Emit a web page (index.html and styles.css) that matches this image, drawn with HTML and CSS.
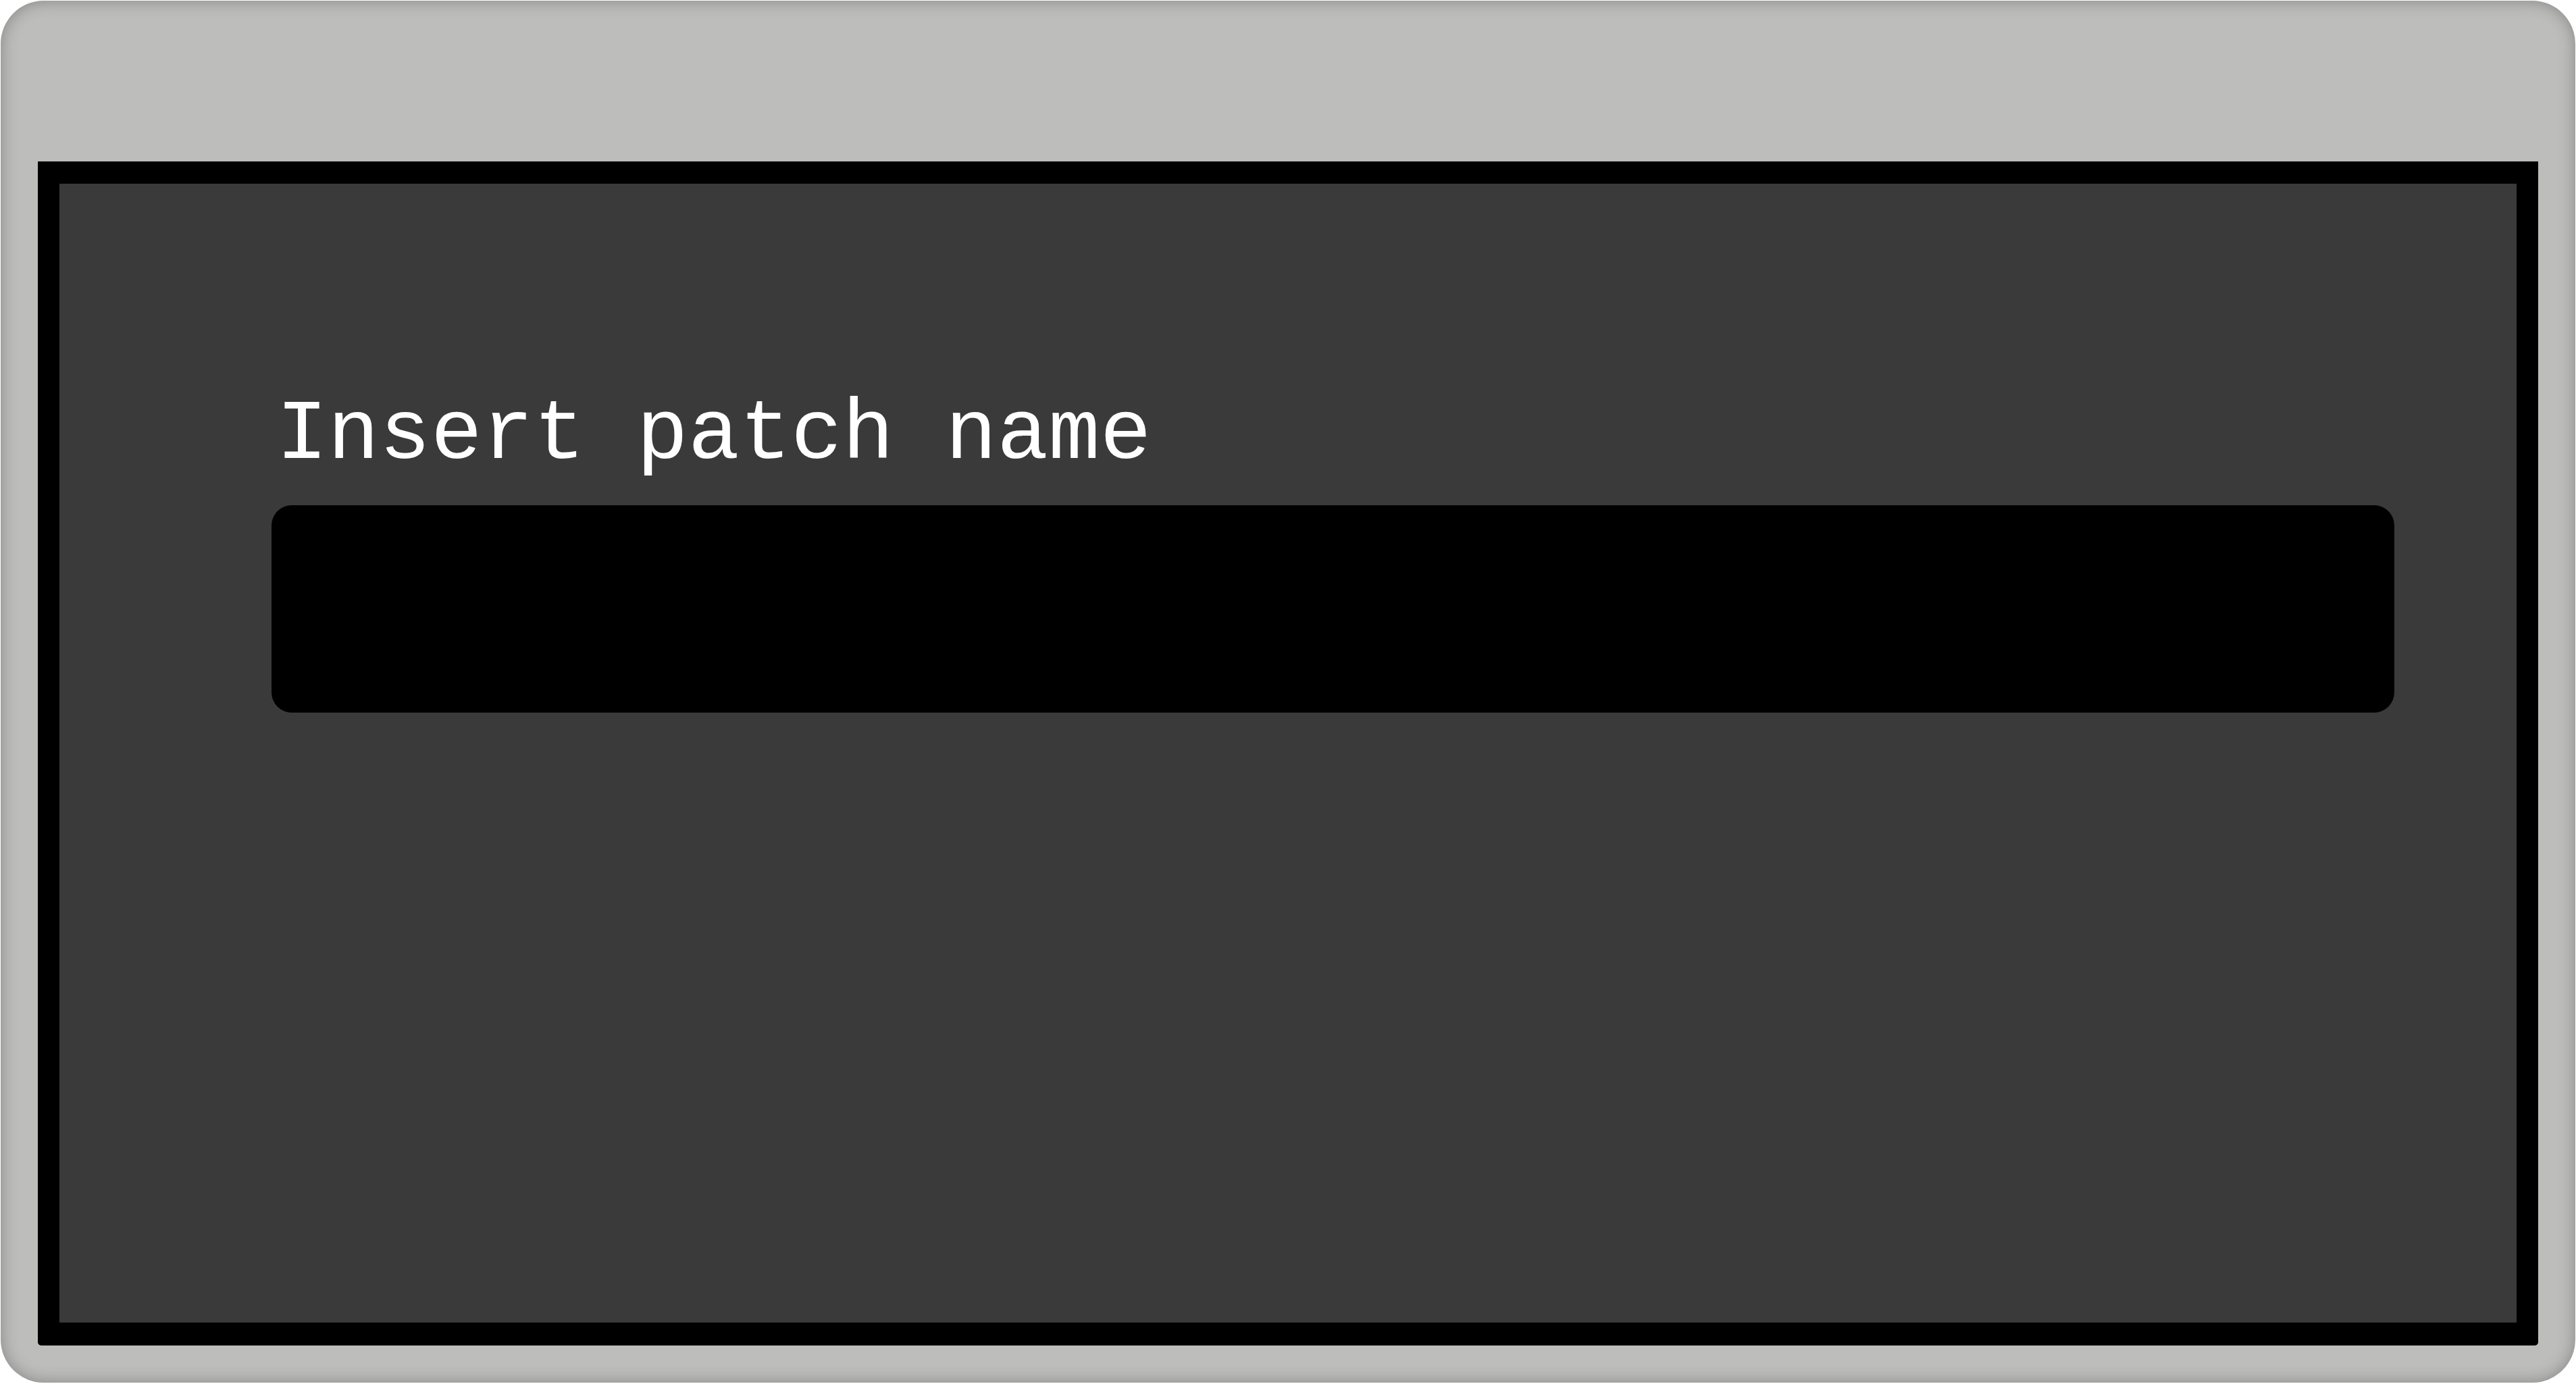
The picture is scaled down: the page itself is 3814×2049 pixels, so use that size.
FILE: index.html
```html
<!DOCTYPE html>
<html>
<head>
<meta charset="utf-8">
<link rel="stylesheet" href="styles.css">
</head>
<body>
<div class="window">
  <div class="frame">
    <div class="panel">
      <label class="label" for="patch">Insert patch name</label>
      <div class="input" id="patch"></div>
    </div>
  </div>
</div>
</body>
</html>
```
FILE: styles.css
```css
html, body {
  margin: 0;
  padding: 0;
  background: #ffffff;
}
body {
  width: 3814px;
  height: 2049px;
  overflow: hidden;
}
.window {
  box-sizing: border-box;
  margin: 1px;
  width: 3812px;
  height: 2046px;
  border-radius: 64px;
  background: #bdbdbb;
  box-shadow: inset 0 0 24px rgba(0, 0, 0, 0.3);
  padding: 238px 55px 55px 55px;
  display: flex;
}
.frame {
  flex: 1;
  background: #000;
  border-radius: 0 0 5px 5px;
  padding: 33px 32px 34px 32px;
  display: flex;
}
.panel {
  flex: 1;
  background: #3a3a3a;
  padding: 300px 181px 0 314px;
  display: flex;
  flex-direction: column;
}
.label {
  display: block;
  font-family: "Liberation Mono", "DejaVu Sans Mono", monospace;
  font-size: 127px;
  line-height: 145px;
  color: #ffffff;
  padding-left: 7px;
  margin-bottom: 31px;
}
.input {
  height: 307px;
  background: #000;
  border-radius: 30px;
}
```
